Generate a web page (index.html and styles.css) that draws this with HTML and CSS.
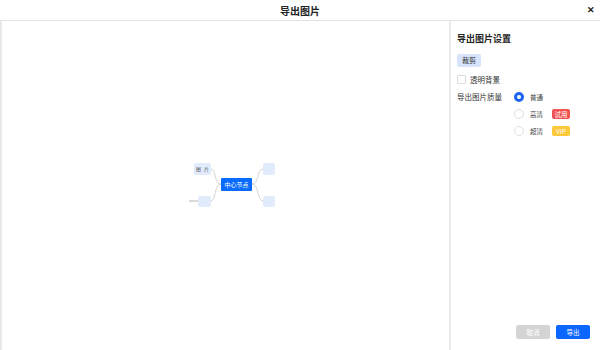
FILE: index.html
```html
<!DOCTYPE html>
<html lang="zh-CN">
<head>
    <meta charset="UTF-8">
    <title>导出图片</title>
    <link rel="stylesheet" href="styles.css">
</head>
<body>
    <div class="dialog">
        <div class="dialog-header">
            <span class="dialog-title">导出图片</span>
            <span class="close-btn">&#x2715;</span>
        </div>

        <div class="dialog-body">
            <!-- Preview of the mind map -->
            <div class="preview">
                <svg class="mindmap" width="447" height="329" viewBox="0 0 447 329">
                    <g fill="none" stroke="#d4d4d4" stroke-width="1">
                        <path d="M219 163 C212 163, 214 148, 209 148"/>
                        <path d="M219 163 C212 163, 214 180, 209 180"/>
                        <path d="M250 163 C257 163, 255 148, 261 148"/>
                        <path d="M250 163 C257 163, 255 180, 261 180"/>
                    </g>
                    <line x1="187" y1="180" x2="196" y2="180" stroke="#d9d9d9" stroke-width="2"/>
                    <rect x="192" y="142" width="17" height="12" rx="2" fill="#e1ebfc"/>
                    <text x="194" y="150" class="node-sm">图</text>
                    <text x="202" y="150" class="node-sm">片</text>
                    <rect x="196" y="175" width="13" height="11" rx="2" fill="#e1ebfc"/>
                    <rect x="261" y="142" width="12" height="12" rx="2" fill="#e1ebfc"/>
                    <rect x="261" y="175" width="12" height="11" rx="2" fill="#e1ebfc"/>
                    <rect x="219" y="157" width="31" height="13" rx="1" fill="#0a6cff"/>
                    <text x="234.5" y="166" class="node-main">中心节点</text>
                </svg>
            </div>

            <!-- Export settings -->
            <div class="settings">
                <div class="settings-title">导出图片设置</div>
                <div class="crop-btn">裁剪</div>

                <label class="check-row">
                    <span class="checkbox"></span>
                    <span>透明背景</span>
                </label>

                <div class="quality">
                    <div class="quality-label">导出图片质量</div>
                    <div class="quality-options">
                        <div class="option">
                            <span class="radio checked"></span>
                            <span class="option-text">普通</span>
                        </div>
                        <div class="option">
                            <span class="radio"></span>
                            <span class="option-text">高清</span>
                            <span class="tag tag-trial">试用</span>
                        </div>
                        <div class="option">
                            <span class="radio"></span>
                            <span class="option-text">超清</span>
                            <span class="tag tag-vip">VIP</span>
                        </div>
                    </div>
                </div>

                <div class="actions">
                    <button class="btn btn-cancel">取消</button>
                    <button class="btn btn-export">导出</button>
                </div>
            </div>
        </div>
    </div>
</body>
</html>
```

FILE: styles.css
```css
/* Page */
body {
    margin: 0;
    background-color: #fff;
    font-family: "Noto Sans CJK SC", "Noto Sans", sans-serif;
    color: #333;
}

.dialog {
    width: 600px;
    height: 350px;
    display: flex;
    flex-direction: column;
    background-color: #fff;
}

/* Header */
.dialog-header {
    height: 20px;
    flex-shrink: 0;
    border-bottom: 1px solid #e3e3e3;
    display: flex;
    align-items: center;
    justify-content: center;
    position: relative;
}

.dialog-title {
    font-size: 10px;
    font-weight: bold;
    color: #222;
}

.close-btn {
    position: absolute;
    top: 3px;
    right: 5px;
    font-size: 9px;
    font-weight: bold;
    color: #222;
}

/* Body */
.dialog-body {
    flex: 1;
    display: flex;
    min-height: 0;
}

.preview {
    width: 447px;
    border-left: 2px solid #e9e9e9;
    border-right: 1px solid #e6e6e6;
}

.mindmap {
    display: block;
}

.node-sm {
    font-size: 5px;
    fill: #555;
}

.node-main {
    font-family: "Noto Sans CJK SC", serif;
    font-size: 6px;
    fill: #fff;
    text-anchor: middle;
}

/* Settings panel */
.settings {
    flex: 1;
    border-left: 1px solid #efefef;
    padding: 12px 10px 10px 6px;
    display: flex;
    flex-direction: column;
}

.settings-title {
    font-size: 9px;
    font-weight: bold;
    color: #222;
    line-height: 12px;
}

.crop-btn {
    align-self: flex-start;
    margin-top: 9px;
    padding: 0 5px;
    height: 13px;
    line-height: 13px;
    font-size: 7px;
    color: #333;
    background-color: #d7e4fb;
    border-radius: 2px;
}

.check-row {
    display: flex;
    align-items: center;
    margin-top: 7px;
    font-size: 7.5px;
    color: #333;
}

.checkbox {
    width: 7px;
    height: 7px;
    border: 1px solid #ddd;
    border-radius: 1px;
    margin-right: 4px;
}

.quality {
    display: flex;
    margin-top: 6px;
}

.quality-label {
    width: 57px;
    font-size: 7.5px;
    line-height: 12px;
    color: #333;
}

.quality-options {
    display: flex;
    flex-direction: column;
    gap: 5px;
}

.option {
    display: flex;
    align-items: center;
    height: 12px;
}

.radio {
    width: 8px;
    height: 8px;
    border: 1px solid #e0e0e0;
    border-radius: 50%;
    box-sizing: content-box;
}

.radio.checked {
    width: 4px;
    height: 4px;
    border: 3px solid #1e64f0;
}

.option-text {
    margin-left: 6px;
    font-size: 6.5px;
    color: #444;
}

.tag {
    margin-left: 9px;
    width: 18px;
    height: 10px;
    line-height: 10px;
    font-size: 6.5px;
    text-align: center;
    color: #fff;
    border-radius: 2px;
}

.tag-trial {
    background-color: #f25252;
}

.tag-vip {
    background-color: #fcc93a;
}

/* Footer buttons */
.actions {
    margin-top: auto;
    display: flex;
    justify-content: flex-end;
    gap: 6px;
    padding-bottom: 1px;
}

.btn {
    width: 34px;
    height: 14px;
    border: none;
    border-radius: 2px;
    font-family: inherit;
    font-size: 6.5px;
    color: #fff;
    padding: 0;
}

.btn-cancel {
    background-color: #d4d4d4;
}

.btn-export {
    background-color: #0a66ff;
}
```
